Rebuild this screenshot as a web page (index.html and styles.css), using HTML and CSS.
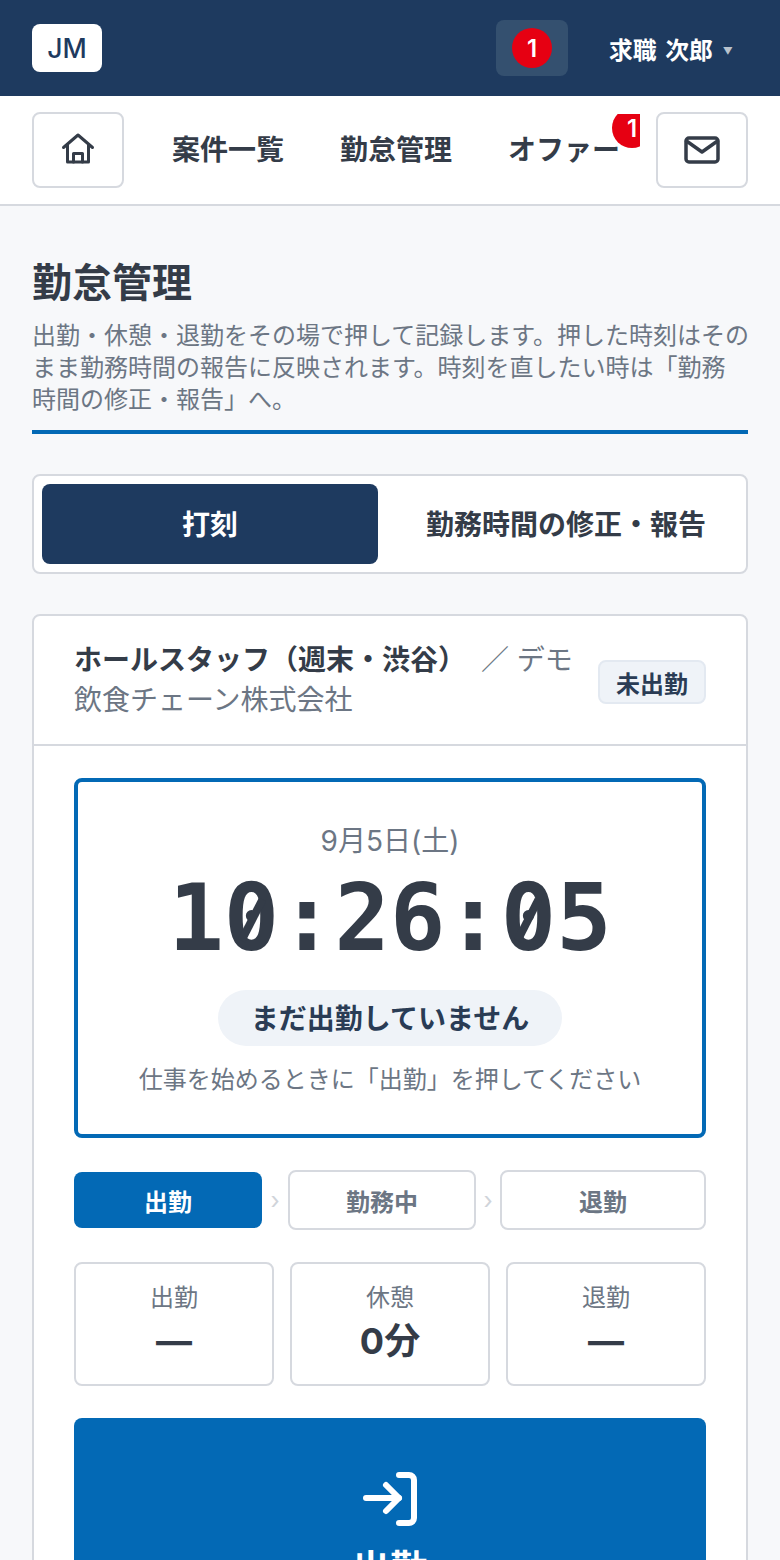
FILE: index.html
```html
<!DOCTYPE html>
<html lang="ja">
<head>
<meta charset="utf-8">
<title>勤怠管理</title>
<link rel="stylesheet" href="styles.css">
</head>
<body>
<header class="topbar">
  <div class="logo">JM</div>
  <div class="top-right">
    <div class="bell"><span class="bell-badge">1</span></div>
    <div class="user">求職 次郎<span class="caret">▼</span></div>
  </div>
</header>
<nav class="nav">
  <a class="icon-btn"><svg width="36" height="36" viewBox="0 0 36 36" fill="none" stroke="#343c48" stroke-width="3" stroke-linecap="round" stroke-linejoin="round"><path d="M3.500 15.500 18 3 32.500 15.500"/><path d="M7.500 12.500V30h21V12.500"/><path d="M13.500 30V21.500h9V30"/></svg></a>
  <div class="nav-items">
    <a class="nav-item">案件一覧</a>
    <a class="nav-item">勤怠管理</a>
    <a class="nav-item offer">オファー<span class="offer-badge">1</span></a>
  </div>
  <a class="icon-btn"><svg width="36" height="28" viewBox="0 0 36 28" fill="none" stroke="#343c48" stroke-width="3.500" stroke-linecap="round" stroke-linejoin="round"><rect x="2" y="2" width="32" height="24" rx="3"/><path d="M2.500 5 18 16 33.500 5"/></svg></a>
</nav>
<main class="main">
  <h1 class="title">勤怠管理</h1>
  <p class="lead">出勤・休憩・退勤をその場で押して記録します。押した時刻はその<br>まま勤務時間の報告に反映されます。時刻を直したい時は「勤務<br>時間の修正・報告」へ。</p>
  <div class="tabs">
    <div class="tab active">打刻</div>
    <div class="tab">勤務時間の修正・報告</div>
  </div>
  <section class="card">
    <div class="card-head">
      <div class="job"><strong>ホールスタッフ（週末・渋谷）</strong> ／ デモ飲食チェーン株式会社</div>
      <span class="status">未出勤</span>
    </div>
    <div class="card-body">
      <div class="clock">
        <div class="date">9月5日(土)</div>
        <div class="time">1<span class="zero">0</span>:26:<span class="zero">0</span>5</div>
        <div class="pill">まだ出勤していません</div>
        <div class="hint">仕事を始めるときに「出勤」を押してください</div>
      </div>
      <div class="steps">
        <div class="step current">出勤</div>
        <span class="chev">›</span>
        <div class="step middle">勤務中</div>
        <span class="chev narrow">›</span>
        <div class="step">退勤</div>
      </div>
      <div class="stats">
        <div class="stat"><div class="stat-label">出勤</div><div class="stat-value">—</div></div>
        <div class="stat"><div class="stat-label">休憩</div><div class="stat-value">0分</div></div>
        <div class="stat"><div class="stat-label">退勤</div><div class="stat-value">—</div></div>
      </div>
      <button class="punch">
        <svg width="56" height="54" viewBox="0 0 56 54" fill="none" stroke="#fff" stroke-width="6" stroke-linecap="round" stroke-linejoin="round"><path d="M37 3h10a5 5 0 0 1 5 5v38a5 5 0 0 1-5 5H37"/><path d="M4 26h33"/><path d="M24 13l13 13-13 13"/></svg>
        <span>出勤</span>
      </button>
    </div>
  </section>
</main>
</body>
</html>
```
FILE: styles.css
```css
* { box-sizing: border-box; }
html, body { margin: 0; padding: 0; }
body {
  width: 780px;
  height: 1560px;
  overflow: hidden;
  background: #f7f8fa;
  color: #343c48;
  font-family: Inter, "Noto Sans CJK JP", sans-serif;
}
.topbar {
  height: 96px;
  background: #1e3a5f;
  display: flex;
  align-items: center;
  justify-content: space-between;
  padding: 0 32px;
}
.logo {
  width: 70px;
  height: 48px;
  background: #fff;
  border-radius: 8px;
  color: #1e3a5f;
  font-size: 26.600px;
  font-weight: 500;
  display: flex;
  align-items: center;
  justify-content: center;
}
.top-right { display: flex; align-items: center; }
.bell {
  width: 72px;
  height: 56px;
  background: #34506f;
  border-radius: 8px;
  display: flex;
  align-items: center;
  justify-content: center;
}
.bell-badge {
  width: 40px;
  height: 40px;
  border-radius: 50%;
  background: #e60012;
  color: #fff;
  font-size: 24px;
  font-weight: 600;
  display: flex;
  align-items: center;
  justify-content: center;
}
.user {
  width: 180px;
  padding-left: 41px;
  color: #fff;
  font-size: 23.800px;
  word-spacing: 3px;
  font-weight: 700;
  white-space: nowrap;
  display: flex;
  align-items: center;
}
.caret {
  font-size: 10px;
  color: #b9c2cd;
  margin: 6px 0 0 10px;
  font-weight: 400;
}
.nav {
  height: 110px;
  background: #fff;
  border-bottom: 2px solid #d6d9df;
  display: flex;
  align-items: center;
  padding: 0 32px;
}
.icon-btn {
  width: 92px;
  height: 76px;
  flex: none;
  background: #fff;
  border: 2px solid #d6d9df;
  border-radius: 8px;
  display: flex;
  align-items: center;
  justify-content: center;
}
.nav-items {
  flex: 1;
  min-width: 0;
  height: 72px;
  margin-right: 16px;
  padding: 0 0 4px 48px;
  display: flex;
  align-items: center;
  gap: 56px;
  overflow: hidden;
  white-space: nowrap;
}
.nav-item {
  font-size: 28px;
  font-weight: 700;
  color: #343c48;
  flex: none;
}
.offer { position: relative; }
.offer-badge {
  position: absolute;
  left: 104px;
  top: -20px;
  width: 40px;
  height: 40px;
  border-radius: 50%;
  background: #e60012;
  color: #fff;
  font-size: 24px;
  font-weight: 600;
  display: flex;
  align-items: center;
  justify-content: center;
}
.main { padding: 50px 32px 0; }
.title {
  margin: 0;
  font-size: 40px;
  line-height: 54px;
  font-weight: 700;
  color: #343c48;
}
.lead {
  margin: 10px 0 0;
  padding-bottom: 14px;
  font-size: 24px;
  line-height: 32px;
  white-space: nowrap;
  color: #6c7684;
  border-bottom: 4px solid #0369b5;
}
.tabs {
  margin-top: 40px;
  height: 100px;
  background: #fff;
  border: 2px solid #d6d9df;
  border-radius: 8px;
  padding: 8px;
  display: flex;
  gap: 16px;
}
.tab {
  flex: 1;
  border-radius: 8px;
  padding-bottom: 3px;
  display: flex;
  align-items: center;
  justify-content: center;
  font-size: 28px;
  font-weight: 700;
  color: #343c48;
}
.tab.active { flex: none; width: 336px; background: #1e3a5f; color: #fff; }
.card {
  margin-top: 40px;
  background: #fff;
  border: 2px solid #d6d9df;
  border-radius: 8px;
}
.card-head {
  height: 130px;
  border-bottom: 2px solid #d6d9df;
  padding: 0 40px;
  display: flex;
  align-items: center;
  gap: 24px;
}
.job {
  flex: 1;
  font-size: 28px;
  line-height: 40px;
  color: #6c7684;
}
.job strong { color: #343c48; font-weight: 700; margin-right: 7px; }
.status {
  flex: none;
  width: 108px;
  height: 44px;
  margin-top: 4px;
  background: #eff3f8;
  border: 2px solid #e3e9f1;
  border-radius: 8px;
  color: #2a3c55;
  font-size: 24px;
  font-weight: 700;
  display: flex;
  align-items: center;
  justify-content: center;
}
.card-body { padding: 32px 40px 0; }
.clock {
  height: 360px;
  border: 4px solid #0369b5;
  border-radius: 8px;
  padding-top: 39px;
  display: flex;
  flex-direction: column;
  align-items: center;
}
.date { font-size: 28px; line-height: 40px; color: #6c7684; }
.time {
  font-family: "DejaVu Sans Mono", monospace;
  font-size: 92px;
  line-height: 96px;
  font-weight: 700;
  color: #343c48;
  margin-top: 10px;
}
.zero { position: relative; display: inline-block; }
.zero::after {
  content: "";
  position: absolute;
  left: 50%;
  top: 50%;
  width: 8px;
  height: 46px;
  margin: -22px 0 0 -4px;
  background: #343c48;
  transform: rotate(27deg);
}
.pill {
  margin-top: 23px;
  width: 344px;
  height: 56px;
  padding-bottom: 2px;
  border-radius: 28px;
  background: #eff3f8;
  color: #2a3c55;
  font-size: 28px;
  font-weight: 700;
  display: flex;
  align-items: center;
  justify-content: center;
}
.hint {
  margin-top: 16px;
  font-size: 24px;
  line-height: 36px;
  color: #6c7684;
}
.steps {
  margin-top: 32px;
  display: flex;
  align-items: center;
}
.step {
  flex: 1;
  height: 60px;
  border: 2px solid #d6d9df;
  border-radius: 8px;
  background: #fff;
  color: #6c7684;
  font-size: 24px;
  font-weight: 700;
  display: flex;
  align-items: center;
  justify-content: center;
}
.step.current {
  flex: none;
  width: 188px;
  height: 56px;
  background: #0369b5;
  border: 0;
  color: #fff;
}
.step.middle { flex: none; width: 188px; }
.chev {
  width: 26px;
  text-align: center;
  flex: none;
  color: #d0d4da;
  font-size: 24px;
}
.chev.narrow { width: 24px; }
.stats {
  margin-top: 32px;
  display: grid;
  grid-template-columns: repeat(3, 1fr);
  gap: 16px;
}
.stat {
  height: 124px;
  border: 2px solid #d6d9df;
  border-radius: 8px;
  padding-top: 16px;
  text-align: center;
}
.stat-label { font-size: 24px; line-height: 36px; color: #6c7684; }
.stat-value { font-size: 36px; line-height: 48px; margin-top: 1px; font-weight: 700; color: #343c48; }
.punch {
  margin-top: 32px;
  width: 100%;
  height: 220px;
  border: 0;
  border-radius: 8px;
  background: #0369b5;
  color: #fff;
  font-family: inherit;
  font-size: 38px;
  font-weight: 700;
  padding: 54px 0 0;
  display: flex;
  flex-direction: column;
  align-items: center;
  gap: 12px;
}
```
